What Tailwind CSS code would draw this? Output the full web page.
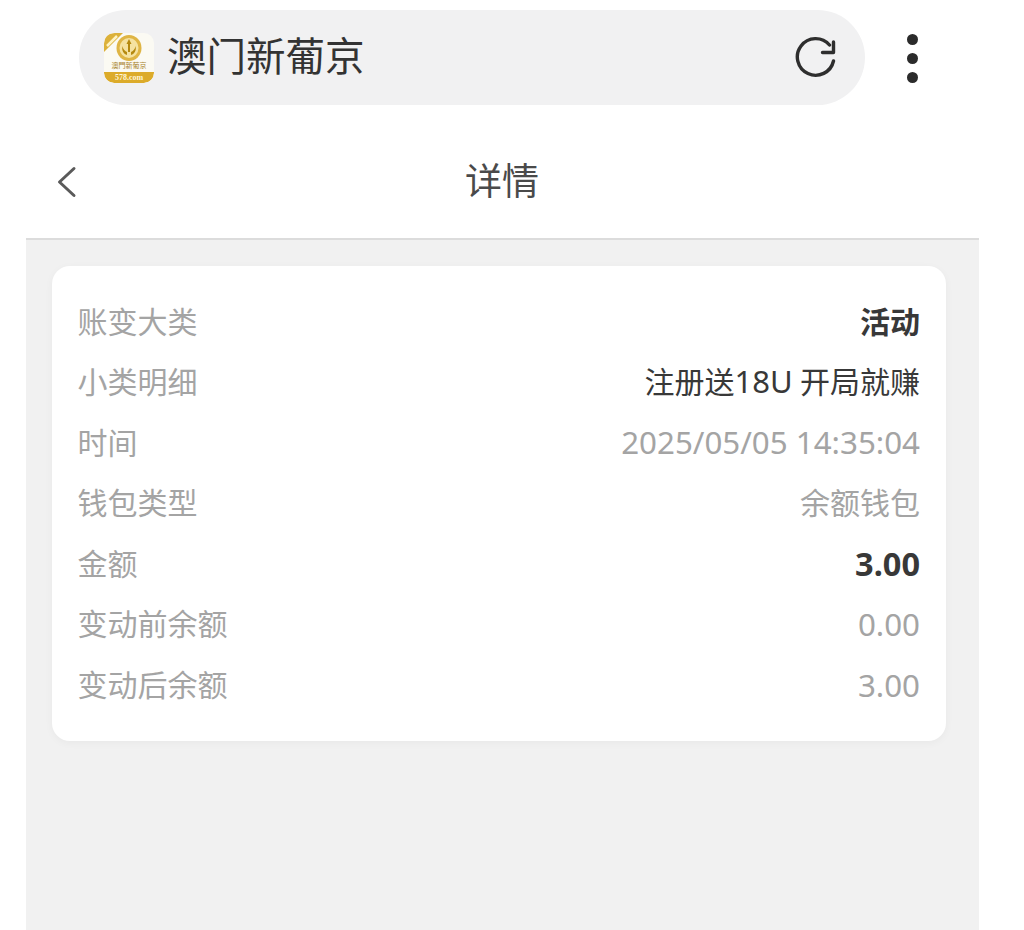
<!DOCTYPE html>
<html lang="zh">
<head>
<meta charset="utf-8">
<script src="https://cdn.jsdelivr.net/npm/@tailwindcss/browser@4"></script>
</head>
<body class="bg-white overflow-hidden">
<div class="w-[1024px] h-[930px] flex flex-col bg-white font-['Roboto','Noto_Sans_CJK_SC',sans-serif]">
  <div class="flex items-center pt-[10px] pl-[79px] h-[105px] shrink-0">
    <div class="w-[786px] h-[95px] rounded-full bg-[#f1f1f2] flex items-center pl-[25px] pr-[27px]">
      <div class="relative w-[50px] h-[50px] rounded-[10px] bg-[#fbfaf3] overflow-hidden shrink-0">
        <svg viewBox="0 0 50 50" class="absolute inset-0 w-full h-full">
          <path d="M0 11 Q0 0 11 0 H19 L0 19 Z" fill="#dcb13a"/>
          <path d="M3 13 L13 3" stroke="#fff3c4" stroke-width="2.5"/>
          <ellipse cx="25" cy="15" rx="12.5" ry="13" fill="#dfb544"/>
          <ellipse cx="25" cy="15" rx="9.5" ry="10" fill="#f5e2a0"/>
          <path d="M25 6 L27.5 11 H26 V19 H24 V11 H22.5 Z M18 13 Q20 18 23 19 V22 Q18 21 18 13 Z M32 13 Q30 18 27 19 V22 Q32 21 32 13 Z" fill="#b5890f"/>
        </svg>
        <div class="absolute left-0 right-0 top-[29px] text-center text-[7px] leading-[9px] text-[#a8842c]">澳門新葡京</div>
        <div class="absolute left-0 right-0 bottom-0 h-[11px] bg-[#dcab2a] rounded-b-[10px] text-center text-[8px] leading-[11px] font-bold text-[#fff6d8] font-['Liberation_Serif',serif]">578.com</div>
      </div>
      <div class="ml-[13px] text-[39.5px] leading-none text-[#333333] mt-[1px]">澳门新葡京</div>
      <svg viewBox="0 0 44 44" class="ml-auto w-[44px] h-[44px] text-[#2e2e2e]" fill="none" stroke="currentColor" stroke-width="3.4" stroke-linecap="round" stroke-linejoin="round">
        <path d="M39.5 25 A18.3 18.3 0 1 1 35.5 9"/>
        <path d="M39.5 6 V16.5 H28.5"/>
      </svg>
    </div>
    <div class="ml-[42px] flex flex-col gap-[8px] w-[12px] shrink-0 mt-[1px]">
      <span class="w-[11px] h-[11px] rounded-full bg-[#2b2b2b]"></span>
      <span class="w-[11px] h-[11px] rounded-full bg-[#2b2b2b]"></span>
      <span class="w-[11px] h-[11px] rounded-full bg-[#2b2b2b]"></span>
    </div>
  </div>
  <div class="ml-[26px] w-[953px] flex-1 flex flex-col min-h-0">
    <div class="relative h-[135px] shrink-0 flex items-center justify-center border-b-2 border-[#dcdcdc]">
      <svg viewBox="0 0 24 36" class="absolute left-[27px] top-[59px] w-[24px] h-[36px] text-[#5a5a5a]" fill="none" stroke="currentColor" stroke-width="3" stroke-linecap="round" stroke-linejoin="round">
        <path d="M21 4.5 L6.5 18 L21 31.5"/>
      </svg>
      <div class="text-[37px] leading-none text-[#4a4a4a] mt-[22px] ml-[-1px]">详情</div>
    </div>
    <div class="flex-1 bg-[#f1f1f1] pt-[26px] pl-[26px] pr-[33px]">
      <div class="h-[475px] bg-white rounded-[18px] shadow-[0_2px_8px_rgba(0,0,0,0.04)] pl-[25.5px] pr-[26px] pt-[26.5px] text-[30px] leading-[60.5px] text-[#a4a4a4]">
        <div class="flex justify-between h-[60.5px]"><span>账变大类</span><span class="font-bold text-[#383838]">活动</span></div>
        <div class="flex justify-between h-[60.5px]"><span>小类明细</span><span class="text-[#383838]">注册送<span class="font-['Noto_Sans',sans-serif] text-[31px] leading-[0]">18U</span> 开局就赚</span></div>
        <div class="flex justify-between h-[60.5px]"><span>时间</span><span class="font-['Noto_Sans',sans-serif] text-[31.3px] leading-[57.5px]">2025/05/05 14:35:04</span></div>
        <div class="flex justify-between h-[60.5px]"><span>钱包类型</span><span>余额钱包</span></div>
        <div class="flex justify-between h-[60.5px]"><span>金额</span><span class="font-['Noto_Sans',sans-serif] text-[32.5px] leading-[58.5px] font-bold text-[#383838]">3.00</span></div>
        <div class="flex justify-between h-[60.5px]"><span>变动前余额</span><span class="font-['Noto_Sans',sans-serif] text-[31.3px] leading-[58.5px]">0.00</span></div>
        <div class="flex justify-between h-[60.5px]"><span>变动后余额</span><span class="font-['Noto_Sans',sans-serif] text-[31.3px] leading-[58.5px]">3.00</span></div>
      </div>
    </div>
  </div>
</div>
</body>
</html>
